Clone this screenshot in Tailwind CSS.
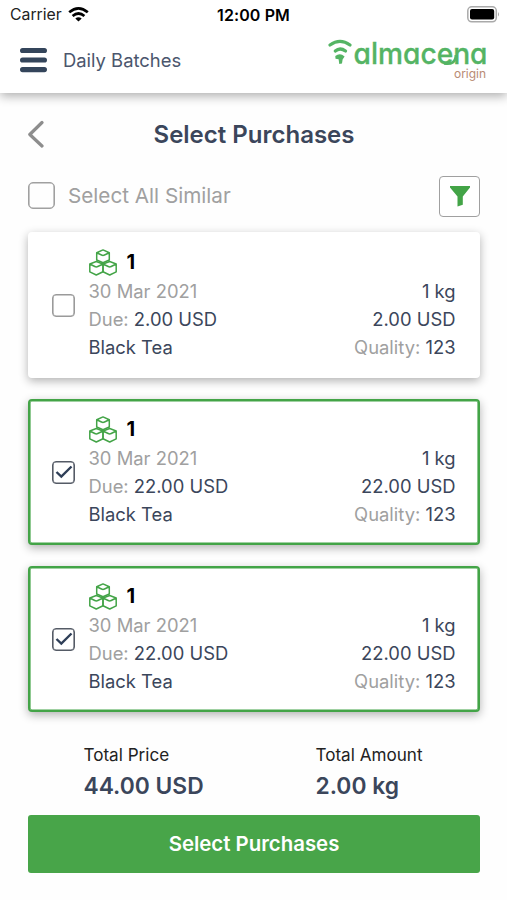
<!DOCTYPE html>
<html lang="en">
<head>
<meta charset="utf-8">
<title>Select Purchases</title>
<script src="https://cdn.jsdelivr.net/npm/@tailwindcss/browser@4"></script>
</head>
<body class="bg-[#fefefe] font-['Inter','Liberation_Sans',sans-serif] text-[#3b465b] w-[507px] h-[900px] overflow-hidden">
<svg class="hidden">
  <symbol id="cubes" viewBox="0 0 28 27"><g fill="none" stroke="#43a447" stroke-width="1.500" stroke-linejoin="round">
    <path d="M14 .9 20.300 3.700V11L14 13.800 7.700 11V3.700ZM7.700 3.700 12.500 6Q14 6.800 15.500 6L20.300 3.700"/>
    <path d="M7.300 12.500 14 15V22.800L7.300 26 .8 22.800V15ZM.8 15 5.800 17.500Q7.300 18.300 8.800 17.500L14 15"/>
    <path d="M20.700 12.500 27.200 15V22.800L20.700 26 14 22.800V15ZM14 15 19.200 17.500Q20.700 18.300 22.200 17.500L27.200 15"/>
  </g></symbol>
</svg>
<div class="flex flex-col">
  <header class="h-[93px] bg-white shadow-[0_3px_10px_rgba(0,0,0,0.32)]">
    <div class="grid grid-cols-3 items-center h-[30px] px-[10px] text-[#222]">
      <div class="flex items-center gap-[6px] text-[15.800px] leading-[30px]"><span>Carrier</span>
        <svg class="-mt-[2px]" width="21" height="15" viewBox="0 0 21 15" fill="none" stroke="#000" stroke-width="2.700"><path d="M1.200 5.300Q10.500-2.500 19.800 5.300M4.600 9Q10.500 4 16.400 9"/><path d="M7.300 11.500Q10.500 8.800 13.700 11.500L10.500 14.500Z" fill="#000" stroke="none"/></svg>
      </div>
      <div class="text-center text-[16px] font-semibold text-black whitespace-nowrap tracking-[0.1px]">12:00 PM</div>
      <div class="flex justify-end"><svg class="relative left-[3px] -mt-[2px]" width="33" height="17" viewBox="0 0 33 17"><rect x=".8" y=".8" width="28.500" height="15" rx="4" fill="#fff" stroke="#aaa" stroke-width="1.500"/><rect x="3" y="3" width="24.200" height="10.600" rx="2" fill="#000"/><path d="M31 6Q33 8.300 31 10.600Z" fill="#aaa"/></svg></div>
    </div>
    <div class="flex items-start justify-between pl-[20px] pr-[20px]">
      <div class="flex items-center gap-[16px] pt-[14px]">
        <svg width="27" height="32" viewBox="0 0 27 32" stroke="#34455b" stroke-width="5.200" stroke-linecap="round"><path d="M2.600 6.500H24.400M2.600 16H24.400M2.600 25.600H24.400"/></svg>
        <span class="text-[18.400px] leading-[32px] text-[#4b566d]">Daily Batches</span>
      </div>
      <svg class="mt-[5px] overflow-visible" width="160" height="50" viewBox="0 0 160 50">
        <g fill="none" stroke="#54b464" stroke-width="3.300" stroke-linecap="round"><path d="M3 10Q13 2.800 23 10M8.300 16Q13 11.900 18.500 16"/></g>
        <path d="M8.300 21Q13 17.300 17.600 21.500L15.600 24.500 15 28.600 12.300 29 11.600 24.300 8.500 23.800Z" fill="#54b464"/>
        <text x="26.500" y="29" textLength="134" lengthAdjust="spacingAndGlyphs" class="font-['Inter'] text-[29.500px] font-medium [font-feature-settings:'cv11'] fill-[#54b464] stroke-[#54b464] stroke-[0.3px]">almacena</text>
        <path d="M117 28.300Q128.500 30.500 129 20" fill="none" stroke="#54b464" stroke-width="2.800"/>
        <text x="127" y="43" textLength="32" class="font-['Inter'] text-[12px] fill-[#b98b73]">origin</text>
      </svg>
    </div>
  </header>

  <main class="pl-[28px] pr-[27px]">
    <div class="relative flex items-center justify-center h-[60px] mt-[12px]">
      <svg class="absolute left-0 top-[14px]" width="18" height="30" viewBox="0 0 18 30" fill="none" stroke="#8d8d8d" stroke-width="3.200" stroke-linecap="round" stroke-linejoin="round"><path d="M14 3.500 1.800 15.500 14 27"/></svg>
      <h1 class="text-[24px] leading-[60px] font-semibold">Select Purchases</h1>
    </div>
    <div class="flex items-center justify-between h-[42px] mt-[10px]">
      <div class="flex items-center gap-[13px]"><span class="size-[27px] rounded-[5px] border border-[#a0a0a0] shadow-[inset_0_0_0_0.6px_#a0a0a0]"></span><span class="text-[20.700px] text-[#a0a0a0]">Select All Similar</span></div>
      <div class="flex size-[41px] items-center justify-center rounded-[4px] border border-[#a0a0a0] bg-white"><svg width="20" height="21" viewBox="0 0 20 21"><path d="M0 0H20V1.500L12.800 10.500V18.700L7.500 20.500V10.500L0 1.500Z" fill="#43a447"/></svg></div>
    </div>

    <section class="mt-[15px] flex flex-col gap-[21px] text-[18.400px] leading-[28.300px]">
      <article class="flex h-[146px] items-center rounded-[4px] border-2 border-white bg-white pl-[22px] pr-[22.500px] shadow-[0_3px_10px_rgba(0,0,0,0.3)]">
        <span class="size-[23px] shrink-0 rounded-[4px] border border-[#9a9a9a] shadow-[inset_0_0_0_0.6px_#9a9a9a]"></span>
        <div class="ml-[13.500px] flex grow items-end justify-between">
          <div>
            <div class="flex items-center gap-[10px] h-[28px]"><svg width="28" height="27"><use href="#cubes"/></svg><b class="text-[20px] font-bold text-black">1</b></div>
            <div class="text-[#a0a0a0]">30 Mar 2021</div><div><span class="text-[#a0a0a0]">Due:</span> 2.00 USD</div><div>Black Tea</div>
          </div>
          <div class="text-right"><div>1 kg</div><div>2.00 USD</div><div><span class="text-[#a0a0a0]">Quality:</span> 123</div></div>
        </div>
      </article>
      <article class="flex h-[146px] items-center rounded-[4px] border-2 border-[#43a447] bg-white pl-[22px] pr-[22.500px] shadow-[inset_0_0_0_0.6px_#43a447,0_3px_10px_rgba(0,0,0,0.3)]">
        <span class="flex size-[23px] shrink-0 items-center justify-center rounded-[4px] border border-[#555b66] shadow-[inset_0_0_0_0.6px_#555b66]"><svg class="shrink-0" width="18" height="14" viewBox="0 0 18 14" fill="none" stroke="#2f3f58" stroke-width="2.400"><path d="M1.500 7 6.300 11.600 16.500 1.500"/></svg></span>
        <div class="ml-[13.500px] flex grow items-end justify-between">
          <div>
            <div class="flex items-center gap-[10px] h-[28px]"><svg width="28" height="27"><use href="#cubes"/></svg><b class="text-[20px] font-bold text-black">1</b></div>
            <div class="text-[#a0a0a0]">30 Mar 2021</div><div><span class="text-[#a0a0a0]">Due:</span> 22.00 USD</div><div>Black Tea</div>
          </div>
          <div class="text-right"><div>1 kg</div><div>22.00 USD</div><div><span class="text-[#a0a0a0]">Quality:</span> 123</div></div>
        </div>
      </article>
      <article class="flex h-[146px] items-center rounded-[4px] border-2 border-[#43a447] bg-white pl-[22px] pr-[22.500px] shadow-[inset_0_0_0_0.6px_#43a447,0_3px_10px_rgba(0,0,0,0.3)]">
        <span class="flex size-[23px] shrink-0 items-center justify-center rounded-[4px] border border-[#555b66] shadow-[inset_0_0_0_0.6px_#555b66]"><svg class="shrink-0" width="18" height="14" viewBox="0 0 18 14" fill="none" stroke="#2f3f58" stroke-width="2.400"><path d="M1.500 7 6.300 11.600 16.500 1.500"/></svg></span>
        <div class="ml-[13.500px] flex grow items-end justify-between">
          <div>
            <div class="flex items-center gap-[10px] h-[28px]"><svg width="28" height="27"><use href="#cubes"/></svg><b class="text-[20px] font-bold text-black">1</b></div>
            <div class="text-[#a0a0a0]">30 Mar 2021</div><div><span class="text-[#a0a0a0]">Due:</span> 22.00 USD</div><div>Black Tea</div>
          </div>
          <div class="text-right"><div>1 kg</div><div>22.00 USD</div><div><span class="text-[#a0a0a0]">Quality:</span> 123</div></div>
        </div>
      </article>
    </section>

    <div class="mt-[29px] grid grid-cols-[232px_1fr] pl-[55.500px]">
      <div><div class="text-[17.100px] leading-[28px] text-[#222]">Total Price</div><div class="text-[22.800px] leading-[33px] font-semibold">44.00 USD</div></div>
      <div><div class="text-[17.100px] leading-[28px] text-[#222]">Total Amount</div><div class="text-[22.800px] leading-[33px] font-semibold">2.00 kg</div></div>
    </div>
    <button class="mt-[13px] h-[58px] w-full rounded-[3px] bg-[#48a549] text-[20.400px] font-semibold text-white">Select Purchases</button>
  </main>
</div>
</body>
</html>
